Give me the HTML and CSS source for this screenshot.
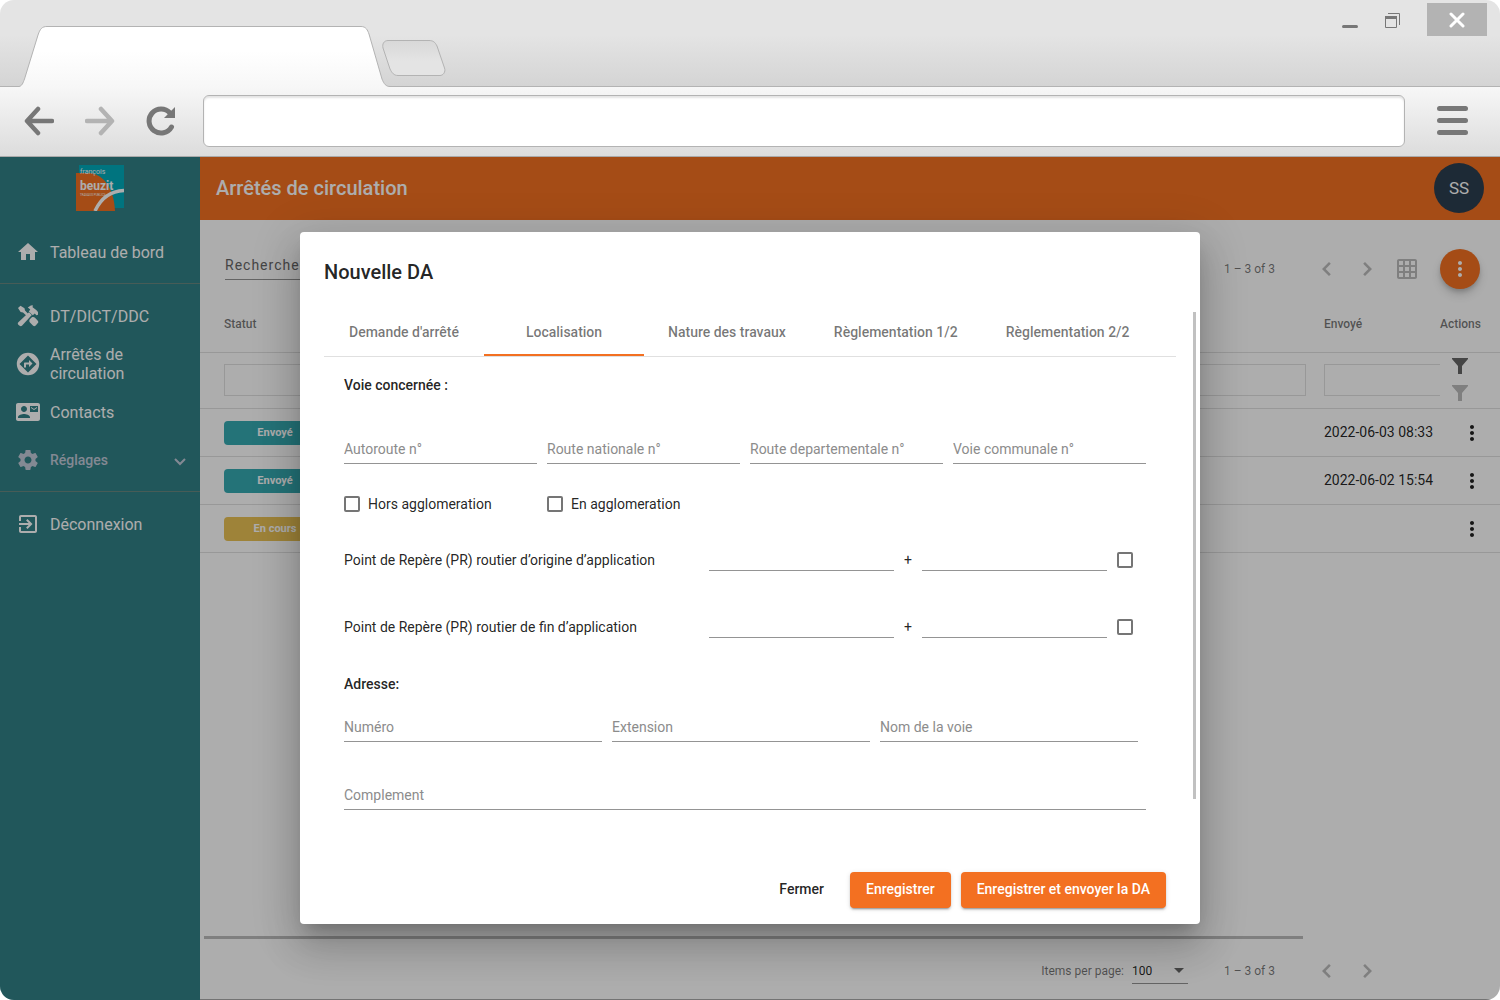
FILE: index.html
```html
<!DOCTYPE html>
<html lang="fr">
<head>
<meta charset="utf-8">
<title>Arrêtés de circulation</title>
<link rel="stylesheet" href="styles.css">
</head>
<body>
<svg width="0" height="0" class="sprite" aria-hidden="true">
  <symbol id="kebab" viewBox="0 0 24 24"><path d="M12 8c1.100 0 2-.9 2-2s-.9-2-2-2-2 .9-2 2 .9 2 2 2zm0 2c-1.100 0-2 .9-2 2s.9 2 2 2 2-.9 2-2-.9-2-2-2zm0 6c-1.100 0-2 .9-2 2s.9 2 2 2 2-.9 2-2-.9-2-2-2z"/></symbol>
  <symbol id="prev" viewBox="0 0 24 24"><path d="M15.800 6.800L14 5l-7 7 7 7 1.800-1.800L10.600 12z"/></symbol>
  <symbol id="next" viewBox="0 0 24 24"><path d="M10 5L8.200 6.800 13.400 12l-5.200 5.200L10 19l7-7z"/></symbol>
  <symbol id="funnel" viewBox="0 0 16 16"><path d="M0 0h16v1l-6 7v8H6V8L0 1z"/></symbol>
</svg>
<div class="window">
  <header class="chrome">
    <div class="tabstrip">
      <svg class="tab-shape" width="374" height="61" viewBox="0 0 374 61" aria-hidden="true">
        <defs><linearGradient id="tabfill" x1="0" y1="0" x2="0" y2="1"><stop offset="0.400" stop-color="#fff"/><stop offset="1" stop-color="#f7f7f7"/></linearGradient></defs>
        <path d="M0 61V60.500H1C4 60 5 57 6.500 53L20 9C22 3 24 .5 29 .5H343C348 .5 349.500 4 351 8L364 53C366 58 368 60.500 372 60.500H374V61Z" fill="url(#tabfill)"/>
        <path d="M0 60.500H1C4 60 5 57 6.500 53L20 9C22 3 24 .5 29 .5H343C348 .5 349.500 4 351 8L364 53C366 58 368 60.500 372 60.500H374" fill="none" stroke="#b3b3b3"/>
      </svg>
      <button class="plain new-tab" aria-label="Nouvel onglet">
        <svg width="64" height="37" viewBox="0 0 64 37"><defs><linearGradient id="newfill" x1="0" y1="0" x2="0" y2="1"><stop offset="0" stop-color="#d8d8d8"/><stop offset="0.600" stop-color="#e4e4e4"/></linearGradient></defs><path d="M6 .5H47C51 .5 53 2 55 6L62.500 28C64 32 61 35.500 58 35.500H16C12 35.500 10 33 8 29L1 8C0 4 2 .5 6 .5Z" fill="url(#newfill)" stroke="#b3b3b3"/></svg>
      </button>
      <div class="window-controls">
        <button class="plain" aria-label="Réduire"><svg width="16" height="32" viewBox="0 0 16 32"><rect y="21" width="16" height="3" rx="1.500" fill="#777"/></svg></button>
        <button class="plain" aria-label="Restaurer"><svg width="15" height="32" viewBox="0 0 15 32" fill="none" stroke="#777"><path d="M3 9.500H14.500V21"/><path d="M.5 12.500H11.500V23.500H.5Z"/><path d="M0 13.500H12" stroke-width="3"/></svg></button>
        <button class="plain close" aria-label="Fermer la fenêtre"><svg width="16" height="16" viewBox="0 0 16 16"><path d="M2 2L14 14M14 2L2 14" stroke="#fff" stroke-width="3" stroke-linecap="round"/></svg></button>
      </div>
    </div>
    <div class="toolbar">
      <button class="plain nav-button" aria-label="Retour"><svg width="30" height="30" viewBox="0 0 30 30"><path d="M14 3L3 15 14 27M4 15H28" fill="none" stroke="#777" stroke-width="4.500" stroke-linecap="round" stroke-linejoin="round"/></svg></button>
      <button class="plain nav-button" aria-label="Suivant"><svg width="30" height="30" viewBox="0 0 30 30"><path d="M16 3L27 15 16 27M26 15H2" fill="none" stroke="#b3b3b3" stroke-width="4.500" stroke-linecap="round" stroke-linejoin="round"/></svg></button>
      <button class="plain nav-button" aria-label="Actualiser"><svg width="30" height="30" viewBox="0 0 30 30"><path d="M25.500 21A12 12 0 1 1 24 7" fill="none" stroke="#777" stroke-width="5" stroke-linecap="round"/><path d="M29 1V12H18Z" fill="#777"/></svg></button>
      <input class="address" type="text" aria-label="Adresse web">
      <button class="plain" aria-label="Menu"><svg width="31" height="30" viewBox="0 0 31 30" fill="#777"><rect width="31" height="5" rx="2.500"/><rect y="12" width="31" height="5" rx="2.500"/><rect y="24" width="31" height="5" rx="2.500"/></svg></button>
    </div>
  </header>

  <div class="app">
    <nav class="sidebar">
      <a class="logo" href="#" aria-label="François Beuzit">
        <svg width="48" height="46" viewBox="0 0 48 46">
          <rect x="3" width="45" height="43" fill="#00abbc"/>
          <path d="M0 8H14C29 10 38 25 39 46H0Z" fill="#f37021"/>
          <path d="M19 46C25 33 35 26 48 25.500" fill="none" stroke="#fff" stroke-width="3.500"/>
          <g fill="#fff" font-family="Roboto, sans-serif">
            <text x="4" y="9" font-size="7">françois</text>
            <text x="4" y="25" font-size="12" font-weight="700">beuzit</text>
            <text x="4" y="31" font-size="3">TRAVAUX PUBLICS</text>
          </g>
        </svg>
      </a>
      <ul class="menu">
        <li><a class="item" href="#"><svg viewBox="0 0 24 24"><path d="M10 20v-6h4v6h5v-8h3L12 3 2 12h3v8z"/></svg><span>Tableau de bord</span></a></li>
        <li class="divided"><a class="item" href="#"><svg viewBox="0 0 24 24"><path d="M2 4L4.500 1.800 8.500 4.200 9 6.600 12.600 10.200 10.800 12 7 8.400 4.600 7.900Z"/><path d="M13.800 15.200L15.600 13.400C17 12.800 18.200 13 19.200 14L21.600 16.600C23.200 18.400 21.800 19.200 20.600 20.500 19.300 21.800 18.500 23 16.900 21.500L14.200 18.800C13.200 17.800 13 16.500 13.800 15.200Z"/><path d="M2.600 18L13 8.200 15.800 11 6.200 21.500C4.800 22.800 3.600 22 2.600 21 1.600 20 1.400 19.200 2.600 18Z"/><path d="M11.800 3.600L14.800 1.600 16.800 1.200 16.600 3.200 20.200 6 22 8V10.800L20.400 11.200 18.800 9.400 16.800 11.200 12.800 7.400 14.300 5.600Z"/></svg><span>DT/DICT/DDC</span></a></li>
        <li><a class="item" href="#"><svg viewBox="0 0 24 24"><path fill-rule="evenodd" d="M12 .8A11.200 11.200 0 1 0 12 23.200 11.200 11.200 0 1 0 12 .8zM12 3.500L20.500 12 12 20.500 3.500 12z"/><path d="M12 5.200L18.800 12 12 18.800 5.200 12z" fill="none"/><path d="M13 8v2.500H9c-.6 0-1 .4-1 1V15.500h2v-3h3V15l3.500-3.500z"/></svg><span>Arrêtés de circulation</span></a></li>
        <li><a class="item" href="#"><svg viewBox="0 0 24 24"><path d="M21 8V7l-3 2-3-2v1l3 2 3-2zm1-5H2C.9 3 0 3.900 0 5v14c0 1.100.9 2 2 2h20c1.100 0 1.990-.9 1.990-2L24 5c0-1.100-.9-2-2-2zM8 6c1.660 0 3 1.340 3 3s-1.340 3-3 3-3-1.340-3-3 1.340-3 3-3zm6 12H2v-1c0-2 4-3.100 6-3.100s6 1.100 6 3.100v1zm8-6h-8V6h8v6z"/></svg><span>Contacts</span></a></li>
        <li><a class="item muted" href="#"><svg viewBox="0 0 24 24"><path d="M19.430 12.980c.04-.32.070-.64.070-.98s-.03-.66-.07-.98l2.110-1.650c.19-.15.240-.42.120-.64l-2-3.460c-.12-.22-.39-.3-.61-.22l-2.490 1c-.52-.4-1.080-.73-1.690-.98l-.38-2.650C14.460 2.180 14.250 2 14 2h-4c-.25 0-.46.180-.49.420l-.38 2.650c-.61.250-1.170.590-1.690.98l-2.490-1c-.23-.09-.49 0-.61.220l-2 3.460c-.13.220-.07.490.12.640l2.110 1.650c-.04.320-.07.650-.07.980s.03.660.07.980l-2.110 1.650c-.19.150-.24.420-.12.640l2 3.460c.12.220.39.300.61.220l2.490-1c.52.400 1.080.730 1.690.98l.38 2.650c.03.240.24.420.49.420h4c.25 0 .46-.18.490-.42l.38-2.650c.61-.25 1.170-.59 1.690-.98l2.490 1c.23.090.49 0 .61-.22l2-3.460c.12-.22.070-.49-.12-.64l-2.110-1.650zM12 15.500c-1.930 0-3.500-1.570-3.500-3.500s1.570-3.500 3.500-3.500 3.500 1.570 3.500 3.500-1.570 3.500-3.500 3.500z"/></svg><span>Réglages</span><svg class="chevron" viewBox="0 0 12 12"><path d="M1 5l5 5 5-5" fill="none" stroke="currentColor" stroke-width="2"/></svg></a></li>
        <li class="divided"><a class="item" href="#"><svg viewBox="0 0 24 24"><path d="M10.090 15.590L11.500 17l5-5-5-5-1.410 1.410L12.670 11H3v2h9.670l-2.580 2.590zM19 3H5c-1.110 0-2 .9-2 2v4h2V5h14v14H5v-4H3v4c0 1.100.89 2 2 2h14c1.100 0 2-.9 2-2V5c0-1.100-.9-2-2-2z"/></svg><span>Déconnexion</span></a></li>
      </ul>
    </nav>

    <main class="main">
      <div class="topbar"><h1>Arrêtés de circulation</h1><button class="plain avatar">SS</button></div>
      <div class="list-tools">
        <input class="search" type="search" placeholder="Recherche" aria-label="Recherche">
        <div class="pager">
          <span class="range">1 – 3 of 3</span>
          <button class="plain icon-button" aria-label="Page précédente"><svg viewBox="0 0 24 24"><use href="#prev"/></svg></button>
          <button class="plain icon-button" aria-label="Page suivante"><svg viewBox="0 0 24 24"><use href="#next"/></svg></button>
          <button class="plain icon-button" aria-label="Colonnes"><svg viewBox="0 0 24 24"><path d="M20 2H4c-1.100 0-2 .9-2 2v16c0 1.100.9 2 2 2h16c1.100 0 2-.9 2-2V4c0-1.100-.9-2-2-2zM8 20H4v-4h4v4zm0-6H4v-4h4v4zm0-6H4V4h4v4zm6 12h-4v-4h4v4zm0-6h-4v-4h4v4zm0-6h-4V4h4v4zm6 12h-4v-4h4v4zm0-6h-4v-4h4v4zm0-6h-4V4h4v4z"/></svg></button>
          <button class="plain fab" aria-label="Actions"><svg viewBox="0 0 24 24"><use href="#kebab"/></svg></button>
        </div>
      </div>
      <table class="list">
        <colgroup><col class="col-status"><col><col class="col-sent"><col class="col-actions"></colgroup>
        <thead>
          <tr><th>Statut</th><th></th><th>Envoyé</th><th class="actions">Actions</th></tr>
          <tr class="filters">
            <td><input type="text" aria-label="Filtrer par statut"></td>
            <td><input type="text" aria-label="Filtrer"></td>
            <td class="cut"><input type="text" aria-label="Filtrer par envoi"></td>
            <td class="actions"><div class="filter-buttons">
              <button class="plain" aria-label="Appliquer les filtres"><svg width="16" height="16"><use href="#funnel"/></svg></button>
              <button class="plain faded" aria-label="Effacer les filtres"><svg width="16" height="16"><use href="#funnel"/></svg></button>
            </div></td>
          </tr>
        </thead>
        <tbody>
          <tr><td><span class="badge">Envoyé</span></td><td></td><td>2022-06-03 08:33</td><td class="actions"><button class="plain row-menu" aria-label="Menu"><svg viewBox="0 0 24 24"><use href="#kebab"/></svg></button></td></tr>
          <tr><td><span class="badge">Envoyé</span></td><td></td><td>2022-06-02 15:54</td><td class="actions"><button class="plain row-menu" aria-label="Menu"><svg viewBox="0 0 24 24"><use href="#kebab"/></svg></button></td></tr>
          <tr><td><span class="badge pending">En cours</span></td><td></td><td></td><td class="actions"><button class="plain row-menu" aria-label="Menu"><svg viewBox="0 0 24 24"><use href="#kebab"/></svg></button></td></tr>
        </tbody>
      </table>
      <div class="list-scroll"></div>
      <div class="pager bottom">
        <label for="page-size">Items per page:</label>
        <div class="select"><select id="page-size"><option>100</option></select><svg width="10" height="5" viewBox="0 0 10 5"><path d="M0 0h10L5 5z"/></svg></div>
        <span class="range">1 – 3 of 3</span>
        <button class="plain icon-button" aria-label="Page précédente"><svg viewBox="0 0 24 24"><use href="#prev"/></svg></button>
        <button class="plain icon-button" aria-label="Page suivante"><svg viewBox="0 0 24 24"><use href="#next"/></svg></button>
      </div>
    </main>

    <div class="backdrop">
      <section class="dialog" role="dialog" aria-labelledby="dialog-title">
        <h2 id="dialog-title">Nouvelle DA</h2>
        <div class="dialog-body">
          <div class="panel">
            <div class="tabs" role="tablist">
              <button class="plain tab" role="tab">Demande d'arrêté</button>
              <button class="plain tab active" role="tab" aria-selected="true">Localisation</button>
              <button class="plain tab" role="tab">Nature des travaux</button>
              <button class="plain tab" role="tab">Règlementation 1/2</button>
              <button class="plain tab" role="tab">Règlementation 2/2</button>
            </div>
            <form class="form" id="da">
              <h3>Voie concernée :</h3>
              <div class="roads">
                <input class="field" placeholder="Autoroute n°" aria-label="Autoroute n°">
                <input class="field" placeholder="Route nationale n°" aria-label="Route nationale n°">
                <input class="field" placeholder="Route departementale n°" aria-label="Route departementale n°">
                <input class="field" placeholder="Voie communale n°" aria-label="Voie communale n°">
              </div>
              <div class="areas">
                <label class="check"><input type="checkbox">Hors agglomeration</label>
                <label class="check"><input type="checkbox">En agglomeration</label>
              </div>
              <div class="markers">
                <div class="marker"><label for="pr-start">Point de Repère (PR) routier d’origine d’application</label><input class="field" id="pr-start"><span>+</span><input class="field" aria-label="Distance d’origine"><input type="checkbox" aria-label="Origine"></div>
                <div class="marker"><label for="pr-end">Point de Repère (PR) routier de fin d’application</label><input class="field" id="pr-end"><span>+</span><input class="field" aria-label="Distance de fin"><input type="checkbox" aria-label="Fin"></div>
              </div>
              <h3 class="address-title">Adresse:</h3>
              <div class="street">
                <input class="field" placeholder="Numéro" aria-label="Numéro">
                <input class="field" placeholder="Extension" aria-label="Extension">
                <input class="field" placeholder="Nom de la voie" aria-label="Nom de la voie">
              </div>
              <input class="field" placeholder="Complement" aria-label="Complement">
            </form>
          </div>
          <div class="scroll-track"><div class="scroll-thumb"></div></div>
        </div>
        <div class="dialog-actions">
          <button class="plain text-button">Fermer</button>
          <button class="plain primary" form="da">Enregistrer</button>
          <button class="plain primary" form="da">Enregistrer et envoyer la DA</button>
        </div>
      </section>
    </div>
  </div>
</div>
</body>
</html>
```
FILE: styles.css
```css
*, *::before, *::after { box-sizing: border-box; }
body { margin: 0; background: #fff; color: rgba(0, 0, 0, .87); font: 14px/20px Roboto, sans-serif; }
.sprite { display: none; }
.plain { display: block; flex: none; padding: 0; border: 0; background: none; color: inherit; font: inherit; cursor: pointer; }
.plain svg { display: block; }
svg { flex: none; }
input, select { min-width: 0; border: 0; border-radius: 0; background: none; color: inherit; font: inherit; outline: none; appearance: none; }

.window { display: flex; flex-direction: column; min-height: 100vh; overflow: hidden; border-radius: 14px; }

/* browser frame */
.chrome { border-bottom: 1px solid #aaa; }
.tabstrip { display: flex; align-items: flex-start; height: 87px; padding-left: 18px; background: linear-gradient(#e4e4e4 40%, #d4d4d4); box-shadow: inset 0 -1px #b3b3b3; }
.tab-shape { align-self: flex-end; margin-right: -10px; }
.new-tab { margin-top: 40px; }
.window-controls { display: flex; gap: 27px; margin: 3px 13px 0 auto; }
.close { display: flex; justify-content: center; align-items: center; width: 60px; height: 33px; background: #b3b3b3; }
.toolbar { display: flex; align-items: center; gap: 31px; height: 69px; padding: 0 32px 2px 24px; background: linear-gradient(#f7f7f7, #dcdcdc); }
.address { flex: 1; height: 52px; margin: 0 1px 0 -4px; padding: 0 12px; border: 1px solid #b3b3b3; border-radius: 6px; background: #fff; box-shadow: inset 0 2px 2px #e4e4e4; }

.app { position: relative; display: flex; flex: 1; }

/* side menu */
.sidebar { flex: none; width: 200px; background: #328187; color: #fff; font-size: 16px; line-height: 19px; }
.logo { display: flex; justify-content: center; height: 71px; padding-top: 8px; }
.menu { margin: 0; padding: 0; list-style: none; }
.item { display: flex; align-items: center; gap: 10px; height: 48px; padding: 0 14px 0 16px; color: inherit; text-decoration: none; }
.item svg { width: 24px; height: 24px; fill: currentColor; }
.divided { margin-top: 7px; padding-top: 8px; border-top: 1px solid #698880; }
.muted { color: #c2cad9; font-size: 14px; font-weight: 500; }
.item .chevron { width: 12px; height: 12px; margin-left: auto; }

/* list page */
.main { display: flex; flex: 1; flex-direction: column; min-width: 0; border-bottom: 1px solid #aaa; background: #fff; }
.topbar { display: flex; justify-content: space-between; align-items: center; height: 63px; padding: 0 16px 2px; background: #f37021; color: #fff; }
.topbar h1 { margin: 0; font-size: 20px; font-weight: 500; line-height: 32px; }
.avatar { width: 50px; height: 50px; border-radius: 50%; background: #2c3e50; font-size: 17px; }
.list-tools { display: flex; justify-content: space-between; align-items: center; height: 77px; padding: 20px 20px 0 25px; }
.search { align-self: flex-start; width: 180px; height: 40px; padding: 15px 0 5px; border-bottom: 1px solid #949494; letter-spacing: 1px; }
.search::placeholder { color: #666; }
.pager { display: flex; align-items: center; color: rgba(0, 0, 0, .54); font-size: 12px; }
.range { margin-right: 32px; }
.icon-button { display: flex; justify-content: center; align-items: center; width: 40px; height: 40px; color: #bbb; }
.icon-button svg, .fab svg, .row-menu svg { width: 24px; height: 24px; fill: currentColor; }
.fab { display: flex; justify-content: center; align-items: center; width: 40px; height: 40px; margin-left: 13px; border-radius: 50%; background: #f37021; color: #fff; box-shadow: 0 3px 5px -1px rgba(0, 0, 0, .2), 0 6px 10px rgba(0, 0, 0, .14); }
.list { width: 100%; border-collapse: collapse; table-layout: fixed; }
.col-status { width: 142px; }
.col-sent { width: 134px; }
.col-actions { width: 60px; }
.list th, .list td { height: 48px; padding: 0; border-bottom: 1px solid #e0e0e0; text-align: left; }
.list th { height: 55px; color: rgba(0, 0, 0, .54); font-size: 12px; font-weight: 500; }
.list tr > :first-child { padding-left: 24px; }
.list tr > :nth-child(3) { padding-left: 18px; }
.list .filters td { height: 56px; }
.filters input { display: block; width: 100%; height: 32px; border: 1px solid #e0e0e0; }
.list .cut input { border-right: 0; }
.filter-buttons { display: flex; flex-direction: column; gap: 11px; padding: 0 0 2px 12px; color: #666; }
.filter-buttons svg { fill: currentColor; }
.faded { color: #bbb; }
.badge { display: block; width: 102px; margin-top: 2px; border-radius: 4px; background: #35aab2; color: #fff; font-size: 11px; font-weight: 700; line-height: 24px; text-align: center; }
.pending { background: #e9c154; }
.row-menu { padding: 2px 0 0 20px; }
.list-scroll { height: 3px; margin: auto 197px 0 4px; background: #bbb; }
.bottom { justify-content: flex-end; height: 60px; padding: 4px 113px 0 0; }
.select { display: flex; align-items: center; width: 56px; height: 26px; margin: 0 36px 0 8px; padding-right: 4px; border-bottom: 1px solid #949494; color: rgba(0, 0, 0, .87); }
.select select { flex: 1; padding: 0; }
.select svg { fill: #666; }

/* dialog */
.backdrop { position: absolute; inset: 0; display: flex; justify-content: center; align-items: center; padding-bottom: 2px; background: rgba(0, 0, 0, .32); }
.dialog { width: 900px; max-width: 80vw; padding: 24px 0 16px; border-radius: 4px; background: #fff; box-shadow: 0 11px 15px -7px rgba(0, 0, 0, .2), 0 24px 38px 3px rgba(0, 0, 0, .14), 0 9px 46px 8px rgba(0, 0, 0, .12); }
.dialog h2 { margin: 0 24px 20px; font-size: 20px; font-weight: 500; line-height: 32px; }
.dialog-body { display: flex; padding: 0 4px 0 24px; }
.panel { flex: 1; min-width: 0; }
.scroll-track { width: 3px; margin: 4px 0 0 17px; }
.scroll-thumb { height: 90%; background: #c1c1c1; }
.tabs { display: flex; border-bottom: 1px solid #e0e0e0; }
.tab { min-width: 160px; height: 48px; padding: 0 24px; color: rgba(0, 0, 0, .54); font-weight: 500; }
.active { box-shadow: inset 0 -2px #f37021; }
.form { padding: 18px 30px 44px 20px; }
.form h3 { margin: 0; font-size: 14px; font-weight: 500; line-height: 20px; }
.field { width: 100%; height: 28px; padding: 0; border-bottom: 1px solid #949494; }
.field::placeholder { color: #8c8c8c; }
.roads, .areas { display: grid; grid-template-columns: repeat(4, 1fr); gap: 10px; }
.roads { margin: 41px 0 30px; }
.check { display: flex; align-items: center; gap: 8px; }
input[type="checkbox"] { flex: none; width: 16px; height: 16px; margin: 0; border: 2px solid #757575; border-radius: 2px; }
.markers { display: grid; gap: 45px; margin: 35px 0 36px; }
.marker { display: flex; align-items: center; gap: 10px; padding-right: 13px; }
.marker label { flex: none; width: 355px; }
.marker span { width: 8px; text-align: center; }
.marker .field { flex: 1; height: 22px; }
.street { display: grid; grid-template-columns: repeat(3, 1fr); gap: 10px; margin: 20px 8px 40px 0; }
.dialog-actions { display: flex; justify-content: flex-end; gap: 10px; padding: 18px 34px 0; }
.text-button, .primary { height: 36px; padding: 0 16px 2px; border-radius: 4px; font-weight: 500; }
.primary { background: #f37021; color: #fff; box-shadow: 0 3px 1px -2px rgba(0, 0, 0, .2), 0 2px 2px rgba(0, 0, 0, .14), 0 1px 5px rgba(0, 0, 0, .12); }
```
